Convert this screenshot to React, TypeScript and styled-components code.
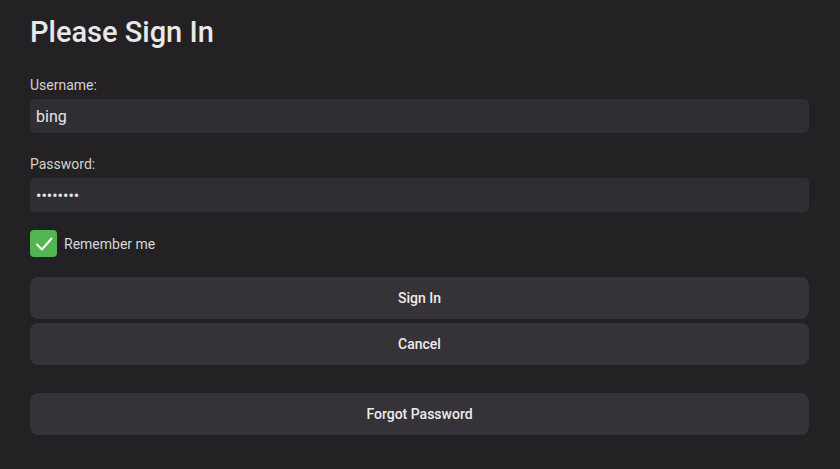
import styled, { createGlobalStyle } from "styled-components";

const GlobalStyle = createGlobalStyle`
  html, body {
    margin: 0;
    padding: 0;
    background: #232124;
  }
  body {
    font-family: Roboto, "Liberation Sans", sans-serif;
    color: #e6e6e6;
  }
`;

function CheckIcon() {
  return (
    <svg width="20" height="20" viewBox="0 0 20 20" fill="none">
      <path
        d="M3 10.5 L8 15.5 L17.5 4.5"
        stroke="#ffffff"
        strokeWidth="2"
        strokeLinecap="round"
        strokeLinejoin="round"
      />
    </svg>
  );
}

function App() {
  return (
    <>
      <GlobalStyle />
      <Page>
        <Title>Please Sign In</Title>
        <Fields>
          <Field>
            <Label htmlFor="username">Username:</Label>
            <Input id="username" type="text" defaultValue="bing" />
          </Field>
          <Field>
            <Label htmlFor="password">Password:</Label>
            <Input id="password" type="password" defaultValue="password" />
          </Field>
        </Fields>
        <CheckRow>
          <CheckBox>
            <CheckIcon />
          </CheckBox>
          <CheckLabel>Remember me</CheckLabel>
        </CheckRow>
        <Actions>
          <Button type="button">Sign In</Button>
          <Button type="button">Cancel</Button>
          <Button type="button" $spaced>
            Forgot Password
          </Button>
        </Actions>
      </Page>
    </>
  );
}

const Page = styled.div`
  display: flex;
  flex-direction: column;
  padding: 13px 31px 0 30px;
`;

const Title = styled.h1`
  margin: 0 0 24px;
  font-size: 29px;
  line-height: 38px;
  font-weight: 500;
  color: #e8e8e8;
`;

const Fields = styled.div`
  display: flex;
  flex-direction: column;
  gap: 21px;
`;

const Field = styled.div`
  display: flex;
  flex-direction: column;
  gap: 4px;
`;

const Label = styled.label`
  font-size: 14px;
  line-height: 20px;
  color: #d2d2d2;
`;

const Input = styled.input`
  box-sizing: border-box;
  height: 34px;
  width: 100%;
  border: none;
  outline: none;
  border-radius: 5px;
  background: #302e33;
  padding: 0 6px;
  font-family: Roboto, "Liberation Sans", sans-serif;
  font-size: 16px;
  color: #e6e6e6;
`;

const CheckRow = styled.div`
  display: flex;
  align-items: center;
  gap: 7px;
  margin-top: 18px;
`;

const CheckBox = styled.span`
  display: flex;
  align-items: center;
  justify-content: center;
  width: 27px;
  height: 27px;
  border-radius: 4px;
  background: #52b552;
`;

const CheckLabel = styled.span`
  font-size: 14px;
  color: #d6d6d6;
`;

const Actions = styled.div`
  display: flex;
  flex-direction: column;
  gap: 4px;
  margin-top: 20px;
`;

const Button = styled.button<{ $spaced?: boolean }>`
  height: 42px;
  width: 100%;
  border: none;
  border-radius: 8px;
  background: #353238;
  font-family: Roboto, "Liberation Sans", sans-serif;
  font-size: 14px;
  font-weight: 500;
  color: #ececec;
  cursor: pointer;
  margin-top: ${({ $spaced }) => ($spaced ? "24px" : "0")};
`;

export default App;
